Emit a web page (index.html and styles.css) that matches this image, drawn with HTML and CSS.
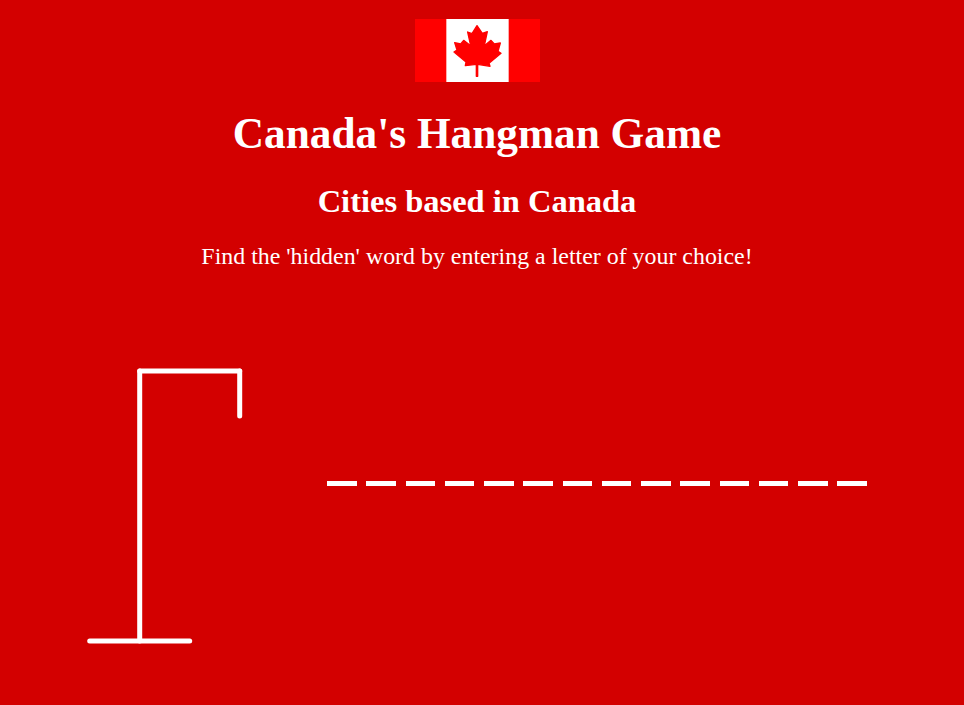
FILE: index.html
```html
<!DOCTYPE html>
<html lang="en">
<head>
    <meta charset="UTF-8">
    <meta name="viewport" content="width=device-width, initial-scale=1.0">
    <title>Canada's Hangman Game</title>
    <link rel="stylesheet" href="styles.css">
</head>
<body>
    <header class="intro">
        <svg class="flag" viewBox="0 0 375 189" role="img" aria-label="Flag of Canada">
            <rect width="375" height="189" fill="#ff0000"/>
            <rect x="94" width="187" height="189" fill="#ffffff"/>
            <polygon fill="#ff0000" stroke="#ff0000" stroke-width="4" stroke-linejoin="round" points="186,20 202,43 217,38 208,80 228,64 238,75 256,72 249,97 258,103 222,133 225,142 188,136 188,172 184,172 184,136 151,140 153,129 117,99 126,93 119,71 137,75 146,64 167,80 158,39 171,44"/>
        </svg>
        <h1>Canada's Hangman Game</h1>
        <h2>Cities based in Canada</h2>
        <p>Find the 'hidden' word by entering a letter of your choice!</p>
    </header>
    <main class="game">
        <svg class="gallows" width="327" height="366" viewBox="0 0 327 366">
            <g stroke="#ffffff" stroke-width="5" stroke-linecap="round" fill="none">
                <line x1="139.7" y1="71" x2="139.7" y2="341"/>
                <line x1="139.7" y1="71" x2="239.7" y2="71"/>
                <line x1="239.7" y1="71" x2="239.7" y2="116"/>
                <line x1="89.7" y1="341" x2="189.7" y2="341"/>
            </g>
        </svg>
        <div class="word">
            <span class="dash"></span><span class="dash"></span><span class="dash"></span><span class="dash"></span>
            <span class="dash"></span><span class="dash"></span><span class="dash"></span><span class="dash"></span>
            <span class="dash"></span><span class="dash"></span><span class="dash"></span><span class="dash"></span>
            <span class="dash"></span><span class="dash"></span>
        </div>
    </main>
</body>
</html>
```

FILE: styles.css
```css
html {
    background-color: #d30000;
}

body {
    margin: 0;
    padding: 19px 10px 0 0;
    height: 705px;
    box-sizing: border-box;
    overflow: hidden;
    color: #fff;
    font-family: "Liberation Serif", serif;
}

.intro {
    display: flex;
    flex-direction: column;
    align-items: center;
    height: 281px;
}

.flag {
    display: block;
    width: 125px;
    height: 63px;
}

h1 {
    margin: 26px 0 0;
    font-size: 43.3px;
    line-height: 50px;
    font-weight: bold;
}

h2 {
    margin: 26px 0 0;
    font-size: 32.5px;
    line-height: 34px;
    font-weight: bold;
}

.intro p {
    margin: 25px 0 0;
    font-size: 23.9px;
    line-height: 26px;
}

.game {
    display: flex;
    align-items: center;
}

.gallows {
    display: block;
    flex: none;
}

.word {
    display: flex;
    justify-content: space-between;
    width: 540px;
}

.dash {
    display: block;
    width: 29.5px;
    height: 5px;
    background-color: #fff;
}
```
